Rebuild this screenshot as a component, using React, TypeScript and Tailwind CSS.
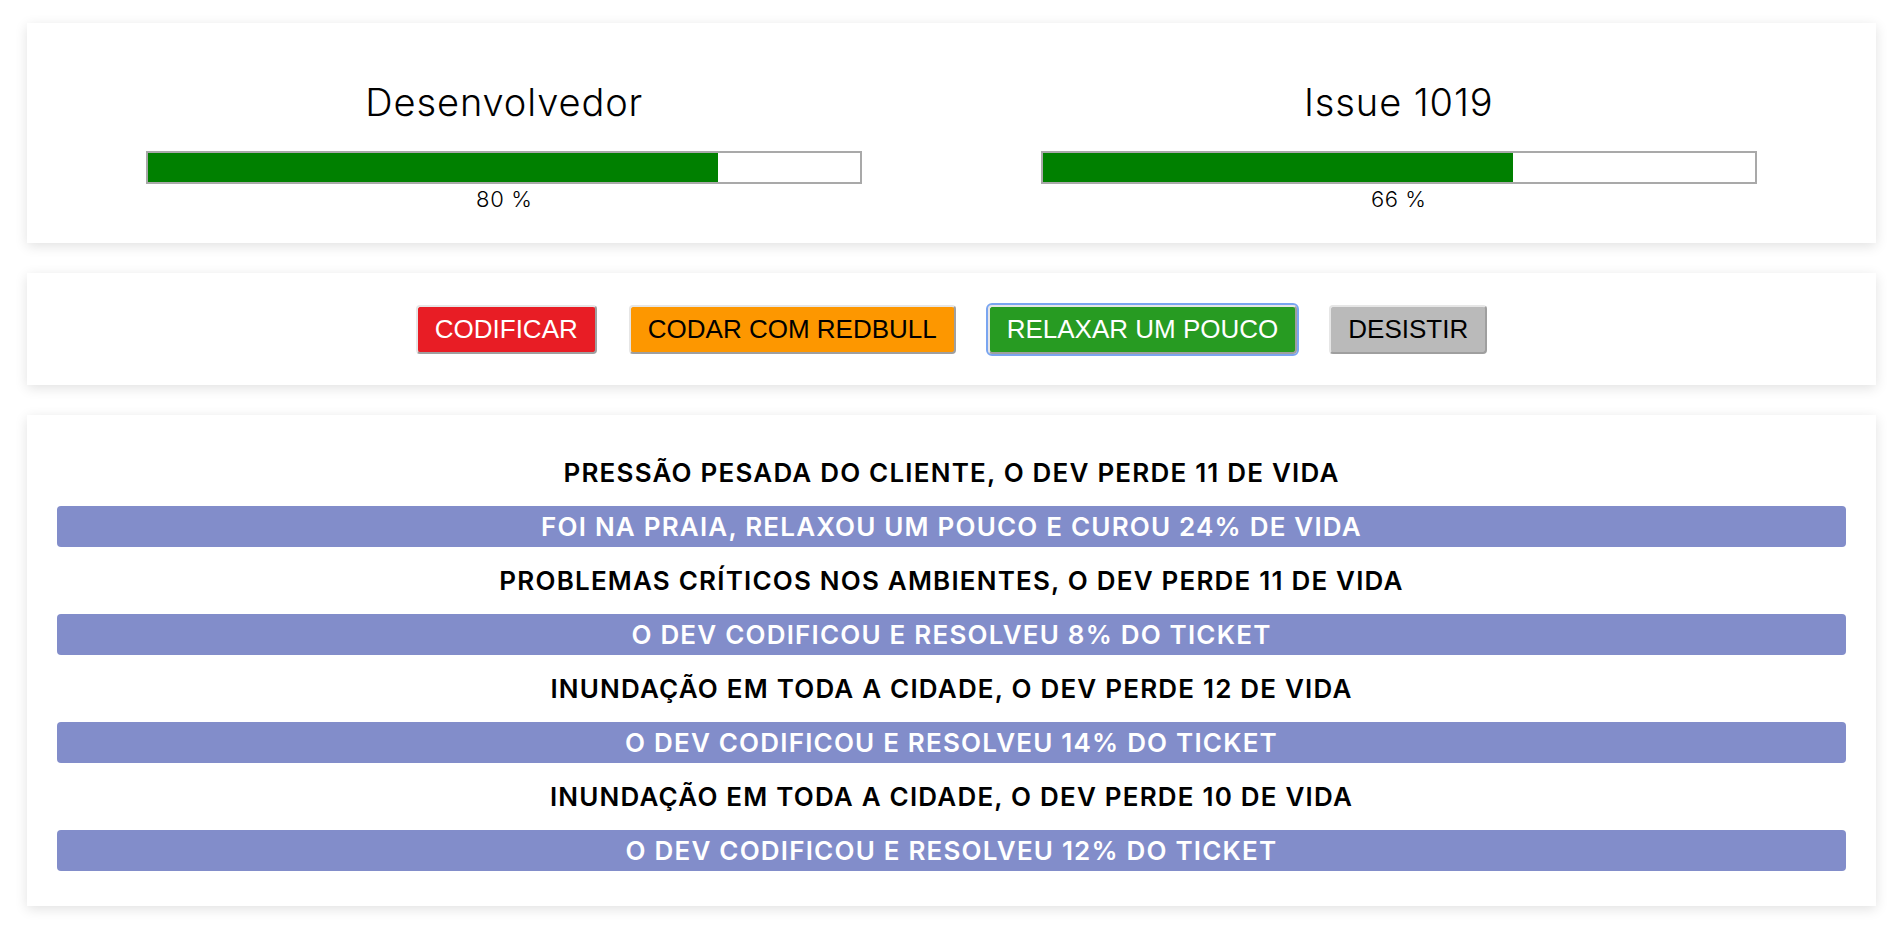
import React from "react";

type Meter = { label: string; value: number };

const meters: Meter[] = [
  { label: "Desenvolvedor", value: 80 },
  { label: "Issue 1019", value: 66 },
];

type Action = { label: string; bg: string; text: string; focused?: boolean };

const actions: Action[] = [
  { label: "CODIFICAR", bg: "bg-[#e81d25]", text: "text-white" },
  { label: "CODAR COM REDBULL", bg: "bg-[#fd9700]", text: "text-black" },
  { label: "RELAXAR UM POUCO", bg: "bg-[#279b22]", text: "text-white", focused: true },
  { label: "DESISTIR", bg: "bg-[#bababa]", text: "text-black" },
];

const log = [
  { dano: "PRESSÃO PESADA DO CLIENTE, O DEV PERDE 11 DE VIDA", acao: "FOI NA PRAIA, RELAXOU UM POUCO E CUROU 24% DE VIDA" },
  { dano: "PROBLEMAS CRÍTICOS NOS AMBIENTES, O DEV PERDE 11 DE VIDA", acao: "O DEV CODIFICOU E RESOLVEU 8% DO TICKET" },
  { dano: "INUNDAÇÃO EM TODA A CIDADE, O DEV PERDE 12 DE VIDA", acao: "O DEV CODIFICOU E RESOLVEU 14% DO TICKET" },
  { dano: "INUNDAÇÃO EM TODA A CIDADE, O DEV PERDE 10 DE VIDA", acao: "O DEV CODIFICOU E RESOLVEU 12% DO TICKET" },
];

const card = "bg-white shadow-[0_3px_12px_rgba(0,0,0,0.12)]";

const App = () => {
  return (
    <div className="min-h-screen bg-white pt-[23px] pb-[20px] pl-[27px] pr-[28px] text-black font-['Inter',sans-serif]">
      <div className={`${card} grid grid-cols-2 px-[30px] pt-[55px] pb-[31px]`}>
        {meters.map((m) => (
          <div key={m.label} className="flex flex-col items-center">
            <div className="text-[38px] leading-[48px] font-light tracking-[0.9px]">{m.label}</div>
            <div className="mt-[25px] w-4/5 h-[33px] border-2 border-[#a9a9a9] bg-white">
              <div className="h-full bg-[#008000]" style={{ width: m.value + "%" }}></div>
            </div>
            <div className="text-[22px] leading-[26px] mt-[2px] font-light tracking-[0.6px]">{m.value} %</div>
          </div>
        ))}
      </div>

      <div className={`${card} mt-[30px] h-[112px] flex items-center justify-center gap-[32px]`}>
        {actions.map((a) => (
          <button
            key={a.label}
            className={`${a.bg} ${a.text} h-[49px] px-[17px] border-2 border-t-[#e6e6e6] border-l-[#e6e6e6] border-b-[#9f9f9f] border-r-[#9f9f9f] rounded-[4px] text-[26px] leading-[30px] font-['Liberation_Sans',Arial,sans-serif] ${a.focused ? "outline-2 outline-[#7aa5f0] outline-offset-[0px]" : ""}`}
          >
            {a.label}
          </button>
        ))}
      </div>

      <div className={`${card} mt-[30px] px-[30px] pt-[24px] pb-[35px]`}>
        {log.map((l, i) => (
          <div key={i}>
            <div className="h-[67px] flex items-center justify-center text-[26px] font-semibold tracking-[1.2px]">
              {l.dano}
            </div>
            <div className="h-[41px] rounded-[4px] bg-[#828dca] text-white flex items-center justify-center text-[26px] font-semibold tracking-[1.2px]">
              {l.acao}
            </div>
          </div>
        ))}
      </div>
    </div>
  );
};

export default App;
